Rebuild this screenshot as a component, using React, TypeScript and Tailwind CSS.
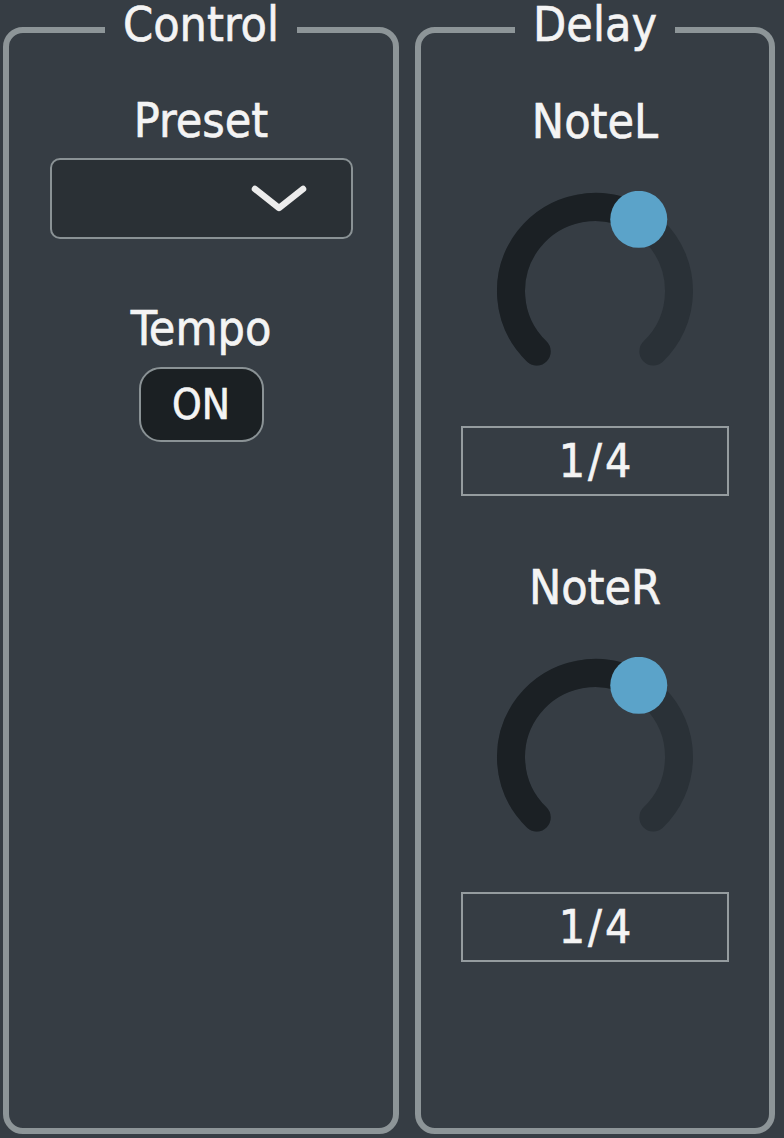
import React from "react";

const FONT = '"DejaVu Sans Condensed", "DejaVu Sans", "Liberation Sans", sans-serif';

function Knob() {
  const cx = 100;
  const cy = 100;
  const r = 84;
  const pt = (deg: number) => {
    const t = (deg * Math.PI) / 180;
    return [cx + r * Math.sin(t), cy - r * Math.cos(t)];
  };
  const [sx, sy] = pt(-136);
  const [ex, ey] = pt(136);
  const [tx, ty] = pt(31.4);
  return (
    <svg width="200" height="200" viewBox="0 0 200 200" className="block">
      <path
        d={`M ${sx} ${sy} A ${r} ${r} 0 1 1 ${ex} ${ey}`}
        fill="none"
        stroke="#2a3137"
        strokeWidth="28"
        strokeLinecap="round"
      />
      <path
        d={`M ${sx} ${sy} A ${r} ${r} 0 0 1 ${tx} ${ty}`}
        fill="none"
        stroke="#1b2024"
        strokeWidth="28"
        strokeLinecap="round"
      />
      <circle cx={tx} cy={ty} r="28.5" fill="#5ba3c9" />
    </svg>
  );
}

function ValueBox({ value }: { value: string }) {
  return (
    <div className="w-[268px] h-[70px] border-2 border-[#959c9f] flex items-center justify-center pl-[3px] text-[46px] leading-[46px] tracking-[3px] text-[#f4f4f4] [-webkit-text-stroke:0.6px_#f4f4f4]">
      {value}
    </div>
  );
}

const label = "text-[48px] leading-[56px] text-[#f4f4f4] [-webkit-text-stroke:0.6px_#f4f4f4]";

export default function App() {
  return (
    <div
      className="w-[784px] h-[1138px] bg-[#363d44] flex gap-[16px] pl-[3px] pt-[2px] pb-[4px]"
      style={{ fontFamily: FONT }}
    >
      <fieldset className="w-[396px] h-full border-[6px] border-[#8d9598] rounded-[20px] min-w-0">
        <legend className="mx-auto px-[18px] pb-[12px] text-[48px] leading-[44px] text-[#f4f4f4] [-webkit-text-stroke:0.6px_#f4f4f4]">
          Control
        </legend>
        <div className="flex flex-col items-center">
          <div className={`mt-[34px] ${label}`}>Preset</div>
          <div className="mt-[10px] w-[303px] h-[81px] rounded-[10px] border-2 border-[#8a9295] bg-[#2a3035] flex items-center justify-end pr-[43px]">
            <svg width="58" height="30" viewBox="0 0 58 30" className="block">
              <path
                d="M 5 5 L 29 24 L 53 5"
                fill="none"
                stroke="#ececec"
                strokeWidth="6.5"
                strokeLinecap="round"
                strokeLinejoin="round"
              />
            </svg>
          </div>
          <div className={`mt-[61px] ${label}`}>Tempo</div>
          <div className="mt-[11px] w-[125px] h-[75px] rounded-[22px] border-2 border-[#8a9295] bg-[#1b2023] flex items-center justify-center text-[42px] leading-[42px] text-[#f4f4f4] [-webkit-text-stroke:0.6px_#f4f4f4]">
            ON
          </div>
        </div>
      </fieldset>
      <fieldset className="w-[360px] h-full border-[6px] border-[#8d9598] rounded-[20px] min-w-0">
        <legend className="mx-auto px-[18px] pb-[12px] text-[48px] leading-[44px] text-[#f4f4f4] [-webkit-text-stroke:0.6px_#f4f4f4]">
          Delay
        </legend>
        <div className="flex flex-col items-center">
          <div className={`mt-[35px] ${label}`}>NoteL</div>
          <div className="mt-[42px]">
            <Knob />
          </div>
          <div className="mt-[35px]">
            <ValueBox value="1/4" />
          </div>
          <div className={`mt-[63px] ${label}`}>NoteR</div>
          <div className="mt-[42px]">
            <Knob />
          </div>
          <div className="mt-[35px]">
            <ValueBox value="1/4" />
          </div>
        </div>
      </fieldset>
    </div>
  );
}
